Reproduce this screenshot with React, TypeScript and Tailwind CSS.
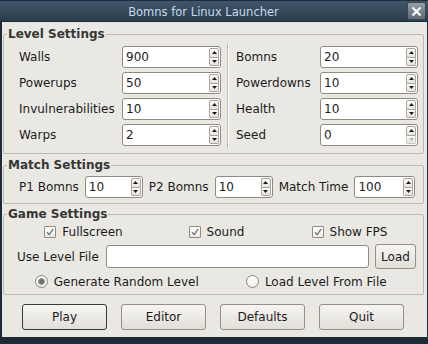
import React from "react";

function Arrow({ dir, disabled }: { dir: "up" | "down"; disabled?: boolean }) {
  return (
    <svg width="5" height="3" viewBox="0 0 5 3">
      <path
        d={dir === "up" ? "M0 3 L2.5 0 L5 3Z" : "M0 0 L5 0 L2.5 3Z"}
        fill={disabled ? "#b9b6af" : "#1a1a1a"}
      />
    </svg>
  );
}

function Spin({
  value,
  className,
  downDisabled,
}: {
  value: string;
  className: string;
  downDisabled?: boolean;
}) {
  return (
    <div className={"flex rounded-[3px] border border-[#8f8b83] bg-white " + className}>
      <div className="flex-1 flex items-center pl-[3px]">{value}</div>
      <div className="w-[11px] flex flex-col py-[1px] pr-[1px]">
        <div className="flex-1 flex items-center justify-center rounded-t-[2px] border border-[#a9a59d] bg-gradient-to-b from-[#fdfdfc] to-[#e5e2dc]">
          <Arrow dir="up" />
        </div>
        <div
          className={
            "flex-1 flex items-center justify-center rounded-b-[2px] border border-t-0 bg-gradient-to-b from-[#fdfdfc] to-[#e5e2dc] " +
            (downDisabled ? "border-[#c9c6bf]" : "border-[#a9a59d]")
          }
        >
          <Arrow dir="down" disabled={downDisabled} />
        </div>
      </div>
    </div>
  );
}

function Group({
  title,
  children,
  className,
}: {
  title: string;
  children: React.ReactNode;
  className: string;
}) {
  return (
    <fieldset className={"border border-[#bdb9b0] rounded-[2px] pl-[3px] pr-[4px] " + className}>
      <legend className="font-bold text-[#363636] leading-[14px] px-[1px]">{title}</legend>
      {children}
    </fieldset>
  );
}

function Check({ label }: { label: string }) {
  return (
    <div className="flex items-center gap-[6px]">
      <div className="w-[12px] h-[12px] border border-[#8f8b83] rounded-[1px] bg-gradient-to-b from-[#ffffff] to-[#eeece8] flex items-center justify-center">
        <svg width="10" height="10" viewBox="0 0 10 10">
          <path d="M2 5.2 L4.2 7.6 L8.2 1.8" stroke="#7a7a7a" strokeWidth="1.4" fill="none" />
        </svg>
      </div>
      <span>{label}</span>
    </div>
  );
}

function Radio({ label, on }: { label: string; on?: boolean }) {
  return (
    <div className="flex items-center gap-[6px]">
      <div className="w-[13px] h-[13px] rounded-full border border-[#8a867e] bg-gradient-to-b from-[#ffffff] to-[#efede9] flex items-center justify-center">
        {on && <div className="w-[7px] h-[7px] rounded-full bg-[#6e6e6e] border border-[#9a9a9a]" />}
      </div>
      <span>{label}</span>
    </div>
  );
}

function Btn({ label, focus }: { label: string; focus?: boolean }) {
  return (
    <div
      className={
        "w-[85px] h-[26px] rounded-[3px] border flex items-center justify-center bg-gradient-to-b from-[#f6f5f2] to-[#e2dfd9] " +
        (focus ? "border-[#3a3a3a]" : "border-[#958f86]")
      }
    >
      {label}
    </div>
  );
}

export default function App() {
  return (
    <div className="w-[428px] h-[344px] bg-[#1e2a35] flex flex-col font-['DejaVu_Sans',sans-serif] text-[12px] leading-[14px] text-[#1c1c1c] overflow-hidden">
      {/* title bar */}
      <div className="h-[21px] flex items-center bg-gradient-to-b from-[#40566a] to-[#2b3d4d] border-t border-[#1f2b36]">
        <div className="flex-1 text-center text-[11.5px] text-[#c7d9ea] pt-[1px]">Bomns for Linux Launcher</div>
        <div className="w-[19px] h-[18px] mr-[2px] rounded-[2px] bg-gradient-to-b from-[#959fa7] to-[#5d6872] border border-[#3b4650] flex items-center justify-center">
          <svg width="11" height="11" viewBox="0 0 11 11">
            <path d="M1.5 1.5 L9.5 9.5 M9.5 1.5 L1.5 9.5" stroke="#f4f6f8" strokeWidth="2.4" />
          </svg>
        </div>
      </div>
      {/* body */}
      <div className="mt-[1px] ml-[2px] mr-[1px] h-[315px] bg-[#eae8e3] pl-[1px] pr-[3px] flex flex-col">
        <Group title="Level Settings" className="mt-[5px] pb-[7px]">
          <div className="flex pl-[12px] pt-[5px]">
            <div className="grid grid-cols-[103px_99px] gap-y-[4px] items-center">
              <span>Walls</span>
              <Spin value="900" className="h-[22px] w-[99px]" />
              <span>Powerups</span>
              <Spin value="50" className="h-[22px] w-[99px]" />
              <span>Invulnerabilities</span>
              <Spin value="10" className="h-[22px] w-[99px]" />
              <span>Warps</span>
              <Spin value="2" className="h-[22px] w-[99px]" />
            </div>
            <div className="ml-[6px] -my-[3px] w-[2px] border-l border-[#bdb9b0] bg-white" />
            <div className="ml-[7px] grid grid-cols-[84px_98px] gap-y-[4px] items-center">
              <span>Bomns</span>
              <Spin value="20" className="h-[22px] w-[98px]" />
              <span>Powerdowns</span>
              <Spin value="10" className="h-[22px] w-[98px]" />
              <span>Health</span>
              <Spin value="10" className="h-[22px] w-[98px]" />
              <span>Seed</span>
              <Spin value="0" className="h-[22px] w-[98px]" downDisabled />
            </div>
          </div>
        </Group>

        <Group title="Match Settings" className="mt-[4px] pb-[5px]">
          <div className="flex items-center gap-[6px] pl-[12px] pt-[4px]">
            <span>P1 Bomns</span>
            <Spin value="10" className="h-[22px] w-[58px]" />
            <span>P2 Bomns</span>
            <Spin value="10" className="h-[22px] w-[58px]" />
            <span>Match Time</span>
            <Spin value="100" className="h-[22px] w-[61px]" />
          </div>
        </Group>

        <Group title="Game Settings" className="mt-[3px] pb-[5px]">
          <div className="pl-[10px] pr-[3px] pt-[4px] flex flex-col">
            <div className="grid grid-cols-3 justify-items-center h-[14px] items-center">
              <Check label="Fullscreen" />
              <Check label="Sound" />
              <Check label="Show FPS" />
            </div>
            <div className="flex items-center mt-[5px] h-[25px]">
              <span>Use Level File</span>
              <div className="ml-[7px] flex-1 h-[23px] rounded-[3px] border border-[#8f8b83] bg-white" />
              <div className="ml-[6px] w-[41px] h-[25px] rounded-[3px] border border-[#958f86] bg-gradient-to-b from-[#f6f5f2] to-[#e2dfd9] flex items-center justify-center">
                Load
              </div>
            </div>
            <div className="grid grid-cols-2 justify-items-center mt-[5px] h-[15px] items-center">
              <Radio label="Generate Random Level" on />
              <Radio label="Load Level From File" />
            </div>
          </div>
        </Group>

        <div className="flex gap-[14px] ml-[19px] mt-[9px]">
          <Btn label="Play" focus />
          <Btn label="Editor" />
          <Btn label="Defaults" />
          <Btn label="Quit" />
        </div>
      </div>
    </div>
  );
}
